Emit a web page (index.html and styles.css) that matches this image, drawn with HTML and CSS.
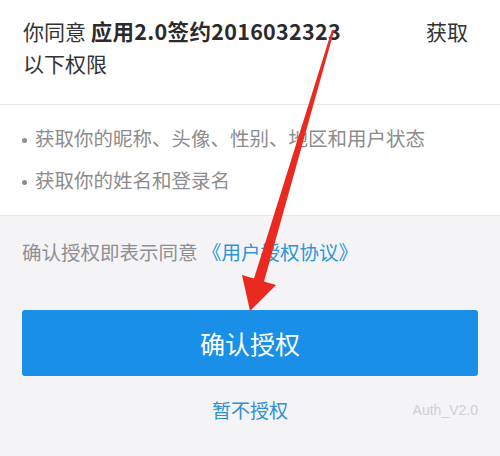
FILE: index.html
```html
<!DOCTYPE html>
<html lang="zh-CN">
<head>
    <meta charset="UTF-8">
    <meta name="viewport" content="width=device-width, initial-scale=1.0">
    <title>授权</title>
    <link rel="stylesheet" href="styles.css">
</head>
<body>
    <div class="page">
        <div class="header">
            <div class="title-row">
                <span>你同意 <strong>应用2.0签约2016032323</strong></span>
                <span>获取</span>
            </div>
            <div>以下权限</div>
        </div>

        <ul class="perms">
            <li>获取你的昵称、头像、性别、地区和用户状态</li>
            <li>获取你的姓名和登录名</li>
        </ul>

        <div class="footer">
            <p class="agree">确认授权即表示同意 <a href="#">《用户授权协议》</a></p>
            <button class="button">确认授权</button>
            <div class="cancel-row">
                <a href="#" class="cancel">暂不授权</a>
                <span class="version">Auth_V2.0</span>
            </div>
        </div>

        <!-- red annotation arrow drawn over the screenshot -->
        <svg class="arrow" width="500" height="456" viewBox="0 0 500 456">
            <polygon points="332,29.7 334.2,30.3 264,281.4 276,285 250,311 242,275 254,278.6" fill="#ea2a20"/>
        </svg>
    </div>
</body>
</html>
```

FILE: styles.css
```css
* {
    box-sizing: border-box;
}

body {
    margin: 0;
    font-family: "Noto Sans CJK SC", "Noto Sans", sans-serif;
    background: #f4f4f6;
}

.page {
    position: relative;
    width: 500px;
    height: 456px;
    overflow: hidden;
}

.header {
    background: white;
    padding: 15px 32px 25px 23px;
    font-size: 21px;
    line-height: 32px;
    color: #333;
    border-bottom: 1px solid #e6e6e8;
}

.title-row {
    display: flex;
    justify-content: space-between;
}

.title-row strong {
    font-weight: bold;
    font-size: 21.5px;
    letter-spacing: 0.3px;
    color: #2b2b2b;
}

.perms {
    list-style: none;
    margin: 0;
    padding: 12px 22px 14px 22px;
    background: white;
    border-bottom: 1px solid #e6e6e8;
    font-size: 19.5px;
    line-height: 42px;
    color: #8c8c8c;
}

.perms li::before {
    content: "";
    display: inline-block;
    width: 5px;
    height: 5px;
    border-radius: 50%;
    background: #8c8c8c;
    margin-right: 8px;
    vertical-align: middle;
}

.footer {
    padding: 21px 22px 0 22px;
}

.agree {
    margin: 0;
    font-size: 19.5px;
    line-height: 30px;
    color: #8f8f92;
}

.agree a {
    color: #2d95d8;
    text-decoration: none;
}

.button {
    display: block;
    width: 100%;
    height: 66px;
    margin-top: 43px;
    border: none;
    border-radius: 3px;
    background: #1a8fe8;
    color: white;
    font-family: inherit;
    font-size: 25px;
}

.cancel-row {
    position: relative;
    margin-top: 19px;
    text-align: center;
    line-height: 30px;
}

.cancel {
    font-size: 19px;
    color: #2e8fd3;
    text-decoration: none;
}

.version {
    position: absolute;
    right: 0;
    top: 0;
    font-family: "Liberation Sans", sans-serif;
    font-size: 14px;
    color: #d0d0d4;
}

.arrow {
    position: absolute;
    left: 0;
    top: 0;
    pointer-events: none;
}
```
